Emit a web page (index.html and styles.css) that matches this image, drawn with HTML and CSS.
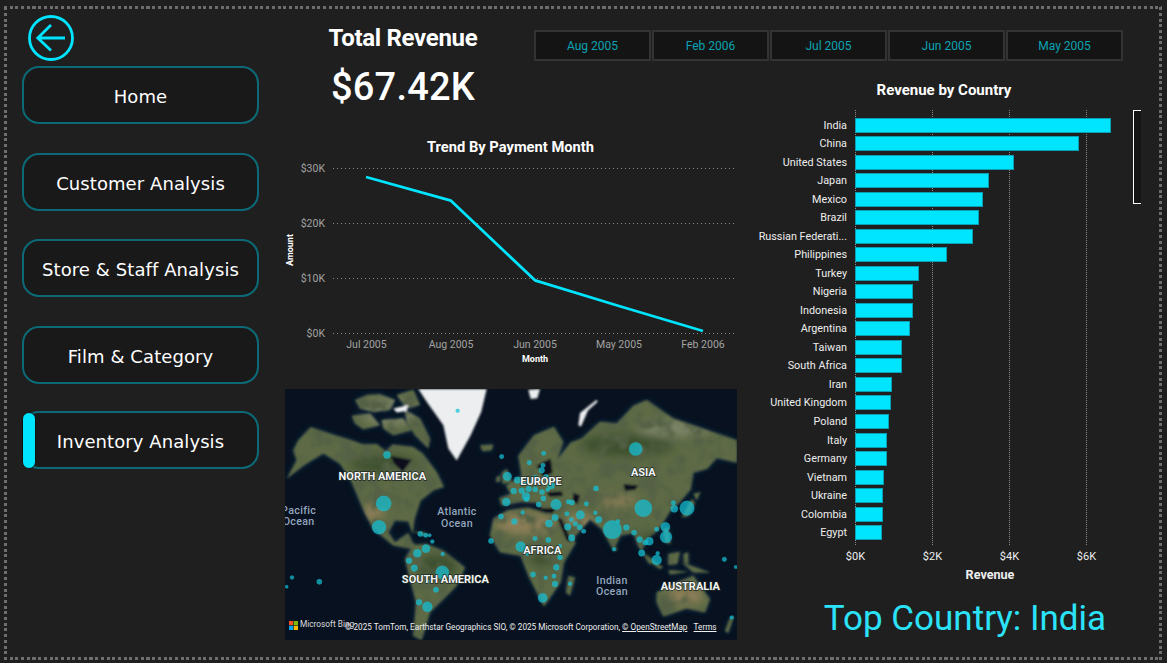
FILE: index.html
```html
<!DOCTYPE html>
<html lang="en">
<head>
<meta charset="utf-8">
<title>Revenue Dashboard</title>
<link rel="stylesheet" href="styles.css">
</head>
<body>
<div class="frame">
  <div class="layout">
    <nav class="nav">
      <svg class="back" viewBox="0 0 46 46" aria-label="Back">
        <circle cx="23" cy="23" r="21.5"/>
        <path d="M37 23H10M23 10 9.800 23 23 35.500"/>
      </svg>
      <a class="nav-btn">Home</a>
      <a class="nav-btn">Customer Analysis</a>
      <a class="nav-btn">Store &amp; Staff Analysis</a>
      <a class="nav-btn">Film &amp; Category</a>
      <a class="nav-btn active"><span class="pill"></span>Inventory Analysis</a>
    </nav>

    <section class="kpi">
      <h1 class="kpi-title">Total Revenue</h1>
      <div class="kpi-value">$67.42K</div>
    </section>

    <div class="slicer">
      <div class="tile">Aug 2005</div>
      <div class="tile">Feb 2006</div>
      <div class="tile">Jul 2005</div>
      <div class="tile">Jun 2005</div>
      <div class="tile">May 2005</div>
    </div>

    <section class="trend">
      <svg class="trend-svg" viewBox="285 130 454 240">
        <text class="chart-title" x="510.500" y="152" text-anchor="middle">Trend By Payment Month</text>
        <g class="grid">
          <line x1="333" x2="736" y1="168.500" y2="168.500"/>
          <line x1="333" x2="736" y1="223.500" y2="223.500"/>
          <line x1="333" x2="736" y1="278.500" y2="278.500"/>
          <line x1="333" x2="736" y1="333.500" y2="333.500"/>
        </g>
        <g class="tick" text-anchor="end">
          <text x="325" y="172">$30K</text>
          <text x="325" y="227">$20K</text>
          <text x="325" y="282">$10K</text>
          <text x="325" y="337">$0K</text>
        </g>
        <g class="tick" text-anchor="middle">
          <text x="366.500" y="348">Jul 2005</text>
          <text x="451" y="348">Aug 2005</text>
          <text x="535" y="348">Jun 2005</text>
          <text x="619" y="348">May 2005</text>
          <text x="703" y="348">Feb 2006</text>
        </g>
        <text class="axis-name" x="535" y="362" text-anchor="middle">Month</text>
        <text class="axis-name" transform="translate(293 250) rotate(-90)" text-anchor="middle">Amount</text>
        <polyline class="trend-line" points="366,177 451,200.700 535,280.300 619,306 703,331"/>
      </svg>
    </section>

    <section class="map">
      <svg class="map-svg" viewBox="15 12 1356 750" preserveAspectRatio="none">
        <defs>
          <filter id="soft" x="-5%" y="-5%" width="110%" height="110%"><feGaussianBlur stdDeviation="2.500"/></filter>
          <filter id="softer" x="-30%" y="-30%" width="160%" height="160%"><feGaussianBlur stdDeviation="14"/></filter>
          <filter id="shelfblur" x="-5%" y="-5%" width="110%" height="110%"><feGaussianBlur stdDeviation="9"/></filter>
          <filter id="grain" x="0" y="0" width="100%" height="100%">
            <feTurbulence type="fractalNoise" baseFrequency=".022" numOctaves="4" seed="7"/>
            <feColorMatrix type="matrix" values="0 0 0 0 .09  0 0 0 0 .12  0 0 0 0 .06  0 0 0 3.400 -1.450"/>
          </filter>
          <path id="landshape" d="M55 165 92 126 165 150 215 165 250 178 290 176 318 198 338 178 400 185 428 205 470 260 492 305 462 314 422 345 404 400 398 445 385 408 345 405 325 440 345 470 385 442 397 470 432 505 400 490 340 480 280 430 255 385 240 350 215 290 180 235 130 205 72 240 20 280 50 225 40 195Z
          M225 45 262 30 300 28 345 45 330 75 280 80 240 70Z
          M215 92 270 85 300 120 250 132 225 115Z
          M305 105 370 100 395 135 340 150 310 130Z
          M375 75 420 100 450 160 445 190 405 150 380 110Z
          M350 30 400 14 420 60 380 70Z
          M400 478 440 475 490 495 555 545 530 600 490 640 450 680 425 762 400 750 408 650 385 560 375 520Z
          M400 438 430 440 452 452 425 448Z
          M665 360 658 338 692 326 678 300 725 272 715 212 762 150 822 125 850 170 832 222 872 172 905 160 960 110 1010 115 1060 62 1100 45 1180 100 1371 165 1371 232 1310 218 1282 250 1240 262 1232 312 1200 350 1172 375 1150 410 1132 436 1100 460 1085 498 1122 532 1108 535 1075 482 1060 442 1022 450 1000 492 965 430 930 402 885 452 878 482 830 440 812 392 770 352 722 350Z
          M630 450 640 400 682 375 742 365 832 395 850 450 888 470 852 530 842 590 792 662 745 570 722 510 660 500Z
          M1130 620 1190 590 1240 570 1290 640 1275 680 1220 668 1150 692 1130 650Z
          M1095 505 1150 545 1138 550 1100 520Z M1165 505 1200 498 1192 535 1165 538Z M1165 553 1225 558 1170 566Z M1205 530 1290 560 1240 560Z M1210 505 1225 500 1225 535 1212 530Z
          M1150 430 1165 425 1172 475 1155 470Z M1205 395 1235 340 1245 352 1225 392Z M1240 325 1262 320 1250 345Z
          M865 570 885 575 870 630 858 620Z M665 262 680 250 695 290 668 296Z M650 275 662 270 660 290 648 290Z M600 180 640 178 635 195 608 198Z M1348 700 1362 690 1345 742 1335 735Z M1005 482 1012 490 1005 500Z"/>
          <clipPath id="landclip"><use href="#landshape"/></clipPath>
        </defs>
        <rect class="ocean" x="15" y="12" width="1356" height="750"/>
        <use class="shelf" href="#landshape" filter="url(#shelfblur)"/>
        <g filter="url(#soft)">
          <use class="land" href="#landshape"/>
          <g clip-path="url(#landclip)">
            <g filter="url(#softer)">
              <ellipse class="sand" cx="735" cy="415" rx="90" ry="32"/>
              <ellipse class="sand" cx="900" cy="410" rx="45" ry="26"/>
              <ellipse class="sand" cx="1010" cy="345" rx="60" ry="16"/>
              <ellipse class="sand" cx="1215" cy="630" rx="58" ry="26"/>
              <ellipse class="sand" cx="280" cy="380" rx="30" ry="28"/>
              <ellipse class="forest" cx="470" cy="545" rx="60" ry="40"/>
              <ellipse class="forest" cx="790" cy="515" rx="42" ry="26"/>
              <ellipse class="forest" cx="1040" cy="180" rx="140" ry="35"/>
              <ellipse class="forest" cx="1110" cy="470" rx="40" ry="30"/>
              <ellipse class="forest" cx="310" cy="235" rx="100" ry="28"/>
              <ellipse class="pale" cx="1180" cy="130" rx="110" ry="25"/>
              <ellipse class="pale" cx="330" cy="80" rx="90" ry="40"/>
            </g>
            <rect class="grain" x="15" y="12" width="1356" height="750" filter="url(#grain)"/>
          </g>
          <path class="ocean" d="M332 212 395 224 368 260 342 234ZM1030 296 1075 300 1065 314 1035 316ZM678 368 830 368 815 385 740 366ZM880 322 900 330 892 358 878 345ZM770 240 812 220 818 262 790 278ZM800 320 845 318 850 332 808 334ZM832 398 845 400 875 470 860 465Z"/>
          <path class="ice" d="M415 12 620 12 604 80 572 150 530 226 505 190 490 120 440 50Z"/>
          <path class="ice" d="M745 14 780 12 772 40 752 42Z"/>
          <path class="ice" d="M950 44 953 50 924 76 903 124 895 120 900 84Z"/>
          <path class="ice" d="M340 70 385 60 380 78 350 82Z"/>
        </g>
        <g class="dots">
          <circle cx="533" cy="77" r="6"/><circle cx="321" cy="209" r="11"/><circle cx="665" cy="214" r="7"/><circle cx="791" cy="204" r="7"/><circle cx="748" cy="232" r="7"/><circle cx="789" cy="240" r="7"/><circle cx="785" cy="255" r="9"/><circle cx="682" cy="273" r="13"/><circle cx="712" cy="284" r="10"/><circle cx="765" cy="282" r="12"/><circle cx="798" cy="276" r="9"/><circle cx="730" cy="290" r="10"/><circle cx="813" cy="300" r="11"/><circle cx="701" cy="317" r="9"/><circle cx="725" cy="316" r="9"/><circle cx="746" cy="311" r="9"/><circle cx="766" cy="312" r="8"/><circle cx="786" cy="320" r="8"/><circle cx="738" cy="333" r="12"/><circle cx="740" cy="342" r="7"/><circle cx="803" cy="313" r="6"/><circle cx="790" cy="339" r="8"/><circle cx="776" cy="357" r="8"/><circle cx="679" cy="350" r="12"/><circle cx="828" cy="357" r="16"/><circle cx="865" cy="349" r="7"/><circle cx="876" cy="351" r="8"/><circle cx="919" cy="355" r="7"/><circle cx="948" cy="309" r="8"/><circle cx="1067" cy="191" r="20"/><circle cx="1090" cy="368" r="26"/><circle cx="1221" cy="368" r="22"/><circle cx="1180" cy="352" r="7"/><circle cx="1183" cy="370" r="11"/><circle cx="901" cy="388" r="13"/><circle cx="946" cy="382" r="6"/><circle cx="861" cy="385" r="7"/><circle cx="825" cy="396" r="10"/><circle cx="728" cy="381" r="6"/><circle cx="663" cy="393" r="8"/><circle cx="703" cy="408" r="9"/><circle cx="807" cy="414" r="11"/><circle cx="874" cy="402" r="7"/><circle cx="886" cy="415" r="7"/><circle cx="863" cy="424" r="10"/><circle cx="899" cy="425" r="8"/><circle cx="911" cy="437" r="7"/><circle cx="956" cy="402" r="10"/><circle cx="997" cy="432" r="28"/><circle cx="1014" cy="407" r="6"/><circle cx="1039" cy="426" r="9"/><circle cx="1062" cy="441" r="8"/><circle cx="1130" cy="431" r="7"/><circle cx="1156" cy="424" r="14"/><circle cx="1158" cy="454" r="18"/><circle cx="1079" cy="462" r="9"/><circle cx="1096" cy="471" r="8"/><circle cx="1108" cy="467" r="12"/><circle cx="875" cy="457" r="10"/><circle cx="765" cy="459" r="7"/><circle cx="805" cy="463" r="8"/><circle cx="840" cy="481" r="6"/><circle cx="722" cy="483" r="15"/><circle cx="742" cy="503" r="7"/><circle cx="633" cy="466" r="8"/><circle cx="840" cy="515" r="8"/><circle cx="829" cy="545" r="9"/><circle cx="759" cy="566" r="8"/><circle cx="797" cy="576" r="6"/><circle cx="822" cy="571" r="7"/><circle cx="825" cy="595" r="9"/><circle cx="870" cy="594" r="6"/><circle cx="788" cy="636" r="14"/><circle cx="1002" cy="491" r="6"/><circle cx="1085" cy="502" r="10"/><circle cx="1130" cy="523" r="15"/><circle cx="1133" cy="503" r="6"/><circle cx="1333" cy="521" r="7"/><circle cx="1367" cy="544" r="5"/><circle cx="1355" cy="695" r="6"/><circle cx="421" cy="445" r="8"/><circle cx="437" cy="449" r="7"/><circle cx="449" cy="449" r="5"/><circle cx="457" cy="468" r="6"/><circle cx="438" cy="489" r="12"/><circle cx="412" cy="503" r="12"/><circle cx="488" cy="505" r="6"/><circle cx="387" cy="525" r="9"/><circle cx="403" cy="547" r="10"/><circle cx="487" cy="560" r="20"/><circle cx="442" cy="587" r="6"/><circle cx="468" cy="612" r="8"/><circle cx="417" cy="649" r="9"/><circle cx="442" cy="663" r="15"/><circle cx="36" cy="575" r="6"/><circle cx="118" cy="588" r="8"/><circle cx="20" cy="603" r="5"/><circle cx="311" cy="354" r="23"/><circle cx="297" cy="425" r="21"/>
        </g>
        <g class="continent" text-anchor="middle">
          <text x="307" y="283">NORTH AMERICA</text>
          <text x="783" y="300">EUROPE</text>
          <text x="1090" y="273">ASIA</text>
          <text x="787" y="505">AFRICA</text>
          <text x="496" y="591">SOUTH AMERICA</text>
          <text x="1231" y="612">AUSTRALIA</text>
        </g>
        <g class="sea" text-anchor="middle">
          <text x="56" y="385">Pacific</text>
          <text x="56" y="417">Ocean</text>
          <text x="531" y="390">Atlantic</text>
          <text x="531" y="423">Ocean</text>
          <text x="996" y="595">Indian</text>
          <text x="996" y="628">Ocean</text>
        </g>
      </svg>
      <div class="credits">
        <svg class="ms-logo" viewBox="0 0 10 10"><rect class="ms-r" width="4.700" height="4.700"/><rect class="ms-g" x="5.300" width="4.700" height="4.700"/><rect class="ms-b" y="5.300" width="4.700" height="4.700"/><rect class="ms-y" x="5.300" y="5.300" width="4.700" height="4.700"/></svg>
        <span class="bing">Microsoft Bing</span>
        <span class="attrib">© 2025 TomTom, Earthstar Geographics SIO, © 2025 Microsoft Corporation, <u>© OpenStreetMap</u>&nbsp;&nbsp;&nbsp;<u>Terms</u></span>
      </div>
    </section>

    <section class="right">
      <h2 class="bars-title">Revenue by Country</h2>
      <div class="plot">
        <i class="gridline g0"></i><i class="gridline g1"></i><i class="gridline g2"></i><i class="gridline g3"></i>
        <div class="row"><span class="lbl">India</span><span class="bar" style="width:256px"></span></div>
        <div class="row"><span class="lbl">China</span><span class="bar" style="width:224px"></span></div>
        <div class="row"><span class="lbl">United States</span><span class="bar" style="width:159px"></span></div>
        <div class="row"><span class="lbl">Japan</span><span class="bar" style="width:134px"></span></div>
        <div class="row"><span class="lbl">Mexico</span><span class="bar" style="width:128px"></span></div>
        <div class="row"><span class="lbl">Brazil</span><span class="bar" style="width:124px"></span></div>
        <div class="row"><span class="lbl">Russian Federati...</span><span class="bar" style="width:118px"></span></div>
        <div class="row"><span class="lbl">Philippines</span><span class="bar" style="width:92px"></span></div>
        <div class="row"><span class="lbl">Turkey</span><span class="bar" style="width:64px"></span></div>
        <div class="row"><span class="lbl">Nigeria</span><span class="bar" style="width:58px"></span></div>
        <div class="row"><span class="lbl">Indonesia</span><span class="bar" style="width:58px"></span></div>
        <div class="row"><span class="lbl">Argentina</span><span class="bar" style="width:55px"></span></div>
        <div class="row"><span class="lbl">Taiwan</span><span class="bar" style="width:47px"></span></div>
        <div class="row"><span class="lbl">South Africa</span><span class="bar" style="width:47px"></span></div>
        <div class="row"><span class="lbl">Iran</span><span class="bar" style="width:37px"></span></div>
        <div class="row"><span class="lbl">United Kingdom</span><span class="bar" style="width:36px"></span></div>
        <div class="row"><span class="lbl">Poland</span><span class="bar" style="width:34px"></span></div>
        <div class="row"><span class="lbl">Italy</span><span class="bar" style="width:32px"></span></div>
        <div class="row"><span class="lbl">Germany</span><span class="bar" style="width:32px"></span></div>
        <div class="row"><span class="lbl">Vietnam</span><span class="bar" style="width:29px"></span></div>
        <div class="row"><span class="lbl">Ukraine</span><span class="bar" style="width:28px"></span></div>
        <div class="row"><span class="lbl">Colombia</span><span class="bar" style="width:28px"></span></div>
        <div class="row"><span class="lbl">Egypt</span><span class="bar" style="width:27px"></span></div>
        <span class="scroll"></span>
      </div>
      <div class="x-axis"><span>$0K</span><span>$2K</span><span>$4K</span><span>$6K</span></div>
      <div class="x-name">Revenue</div>
      <div class="top-country">Top Country: India</div>
    </section>
  </div>
</div>
</body>
</html>
```
FILE: styles.css
```css
* { box-sizing: border-box; }
html, body { margin: 0; height: 100%; overflow: hidden; }
body { background: #1f1f1f; font-family: Roboto, "Liberation Sans", sans-serif; color: #fff; }

.frame {
  width: 1158px;
  height: 654px;
  margin: 6px 5px 3px 4px;
  padding: 9px 0 0 18px;
  background-image:
    repeating-linear-gradient(90deg, #6e6e6e 0 3px, transparent 3px 5.7px),
    repeating-linear-gradient(90deg, #6e6e6e 0 3px, transparent 3px 5.7px),
    repeating-linear-gradient(0deg, #6e6e6e 0 3px, transparent 3px 5.7px),
    repeating-linear-gradient(0deg, #6e6e6e 0 3px, transparent 3px 5.7px);
  background-size: 100% 3px, 100% 3px, 3px 100%, 3px 100%;
  background-position: 0 0, 0 100%, 0 0, 100% 0;
  background-repeat: no-repeat;
}

.layout {
  display: grid;
  grid-template-columns: 237px 26px 249px 205px 16px 1fr;
  grid-template-rows: 46px 69px 259px 251px;
}

/* navigation */
.nav { grid-column: 1; grid-row: 1 / 5; display: flex; flex-direction: column; }
.back { width: 46px; height: 46px; margin: 0 0 5px 6px; fill: none; stroke: #00e5ff; stroke-width: 2.800; }
.nav-btn {
  position: relative;
  display: flex; align-items: center; justify-content: center;
  height: 58px;
  margin-bottom: 29px;
  padding-top: 2px;
  border: 2px solid #0c6a77;
  border-radius: 17px;
  background: #191919;
  font: 18px "DejaVu Sans", Verdana, sans-serif;
  letter-spacing: .08px;
  color: #fff;
}
.nav-btn:nth-of-type(2) { margin-bottom: 28px; }
.nav-btn:nth-of-type(4) { margin-bottom: 27px; }
.pill {
  position: absolute; left: -2px; top: -1px;
  width: 14px; height: 57px;
  background: #00e5ff;
  border: 1px solid #111;
  border-radius: 7px;
}

/* KPI */
.kpi { grid-column: 3; grid-row: 1 / 3; width: 236px; text-align: center; padding-top: 8px; }
.kpi-title { margin: 0; font-size: 24px; line-height: 30px; font-weight: 700; letter-spacing: -.3px; }
.kpi-value { margin-top: 10px; font-size: 38px; line-height: 48px; font-weight: 500; letter-spacing: .2px; }

/* slicer */
.slicer { grid-column: 4 / 7; grid-row: 1; align-self: end; width: 589px; height: 31px; display: grid; grid-template-columns: repeat(5, 1fr); gap: 1px; }
.tile { display: flex; align-items: center; justify-content: center; border: 2px solid #333; background: #141414; color: #0ba3b3; font-size: 12px; }

/* trend chart */
.trend { grid-column: 3 / 5; grid-row: 3; }
.trend-svg { display: block; width: 454px; height: 240px; }
.chart-title { fill: #fff; font-size: 14.700px; font-weight: 700; }
.grid line { stroke: #8a8a8a; stroke-width: 1; stroke-dasharray: 1 3; }
.tick text { fill: #a3a3a3; font-size: 10.500px; }
.axis-name { fill: #fff; font-size: 9px; font-weight: 700; }
.trend-line { fill: none; stroke: #00e5ff; stroke-width: 2.800; stroke-linejoin: round; }

/* map */
.map { grid-column: 3 / 5; grid-row: 4; position: relative; width: 452px; height: 251px; }
.map-svg { display: block; width: 452px; height: 251px; }
.ocean { fill: #07111f; }
.shelf { fill: #14304a; }
.land { fill: #5d6a44; }
.ice { fill: #eceef0; }
.sand { fill: #8e7f58; }
.forest { fill: #3c4f2e; }
.pale { fill: #7d8468; }
.dots circle { fill: #14c0d6; fill-opacity: .72; stroke: #20d0e6; stroke-opacity: .5; stroke-width: 1; }
.continent text { fill: #f4f4f4; font-size: 33px; font-weight: 700; paint-order: stroke; stroke: #1d2a24; stroke-width: 4px; }
.sea text { fill: #93a5bd; font-size: 32px; font-weight: 500; letter-spacing: 1px; paint-order: stroke; stroke: #07111f; stroke-width: 3px; }
.credits { position: absolute; left: 4px; right: 0; bottom: 7px; display: flex; align-items: center; font-size: 8.200px; color: #eee; white-space: nowrap; }
.ms-logo { width: 9px; height: 9px; margin: 0 2px 2px 0; flex: none; }
.ms-r { fill: #f25022; } .ms-g { fill: #7fba00; } .ms-b { fill: #00a4ef; } .ms-y { fill: #ffb900; }
.bing { width: 45px; flex: none; margin-bottom: 4px; color: #ddd; font-size: 8.300px; }
.attrib { margin-top: 2px; }

/* bars */
.right { grid-column: 6; grid-row: 1 / 5; padding-top: 65px; }
.bars-title { margin: 0; width: 378px; text-align: center; font-size: 15px; line-height: 20px; font-weight: 700; }
.plot { position: relative; width: 386px; height: 435px; margin-top: 10px; padding-top: 6px; }
.gridline { position: absolute; top: 0; bottom: 0; width: 0; border-left: 1px dotted #8a8a8a; }
.g0 { left: 100px; } .g1 { left: 177px; } .g2 { left: 254px; } .g3 { left: 331px; }
.row { position: relative; display: flex; align-items: center; height: 18.520px; }
.lbl { width: 92px; margin-right: 8px; text-align: right; font-size: 10.800px; color: #eee; white-space: nowrap; }
.bar { height: 15px; background: #00e5ff; border: 1px solid #0a9fb3; }
.scroll { position: absolute; left: 378px; top: 0; width: 8px; height: 94px; background: #151515; border: solid #fff; border-width: 1px 0 1px 1px; }
.x-axis { display: flex; margin: 5px 0 0 62px; font-size: 11px; color: #eee; }
.x-axis span { width: 77px; text-align: center; }
.x-name { width: 470px; text-align: center; margin-top: 4px; font-size: 12.600px; font-weight: 700; color: #eee; }
.top-country { width: 420px; margin-top: 15px; text-align: center; font-size: 35px; line-height: 44px; color: #2be3f8; }
```
